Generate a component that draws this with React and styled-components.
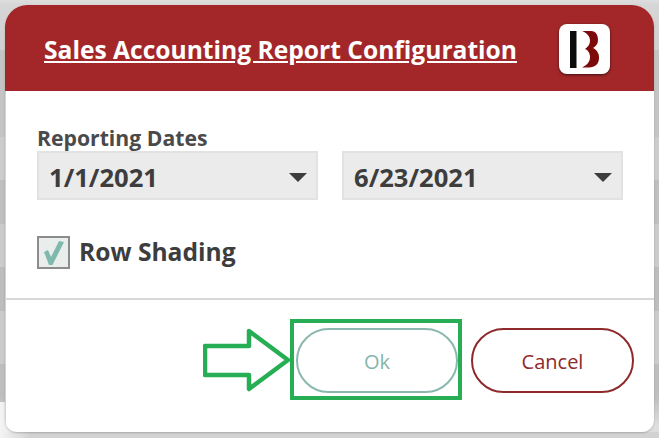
import styled, {createGlobalStyle} from 'styled-components'

const GlobalStyle = createGlobalStyle`
  html, body {
    margin: 0;
    padding: 0;
    background: #e4e4e4;
  }
  body {
    font-family: 'Open Sans', 'Noto Sans', sans-serif;
  }
`

const Logo = () => (
  <LogoBox>
    <svg width="30" height="37" viewBox="0 0 30 37">
      <rect x="0" y="0" width="6.5" height="37" fill="#0c0c0c" />
      <path
        d="M12 0 H21 C26 0 28 4 28 9 C28 13 26 15 23 17 C27 19 29 22 29 27 C29 33 25 36.500 19 36.500 H12 C17 34 20 31 20 26 C20 22 18 19 15 18 C18 16 20 13 20 10 C20 5 17 2 12 0 Z"
        fill="#7c0a0a"
      />
    </svg>
  </LogoBox>
)

const DateSelect = ({value}) => (
  <Select>
    <span>{value}</span>
    <Caret />
  </Select>
)

const App = () => (
  <Page>
    <GlobalStyle />
    <Dialog>
      <Header>
        <Title>Sales Accounting Report Configuration</Title>
        <Logo />
      </Header>
      <Body>
        <Label>Reporting Dates</Label>
        <DateRow>
          <DateSelect value="1/1/2021" />
          <DateSelect value="6/23/2021" />
        </DateRow>
        <CheckRow>
          <CheckBox>
            <svg width="29" height="29" viewBox="0 0 29 29">
              <path d="M5 14 L9 12 L12 19 L20 3 L25 4 L13.500 27 H10 Z" fill="#7fb9ae" />
            </svg>
          </CheckBox>
          <CheckLabel>Row Shading</CheckLabel>
        </CheckRow>
      </Body>
      <Footer>
        <Callout>
          <svg width="90" height="66" viewBox="0 0 90 66">
            <path
              d="M2 19 H46 V4 L85 33 L46 62 V48 H2 Z"
              fill="none"
              stroke="#27ae55"
              strokeWidth="4.500"
              strokeLinejoin="round"
            />
          </svg>
          <Highlight />
        </Callout>
        <PillButton $color="#8ab8ae" $text="#86b5ab" $width="162px">
          Ok
        </PillButton>
        <PillButton $color="#8f2a2c" $text="#8f2a2c" $width="163px">
          Cancel
        </PillButton>
      </Footer>
    </Dialog>
  </Page>
)

export default App

const Page = styled.div`
  width: 659px;
  height: 438px;
  padding: 5px 5px 0 5px;
  box-sizing: border-box;
  overflow: hidden;
  background:
    linear-gradient(90deg, #f4f4f4, rgba(244, 244, 244, 0) 30px) left bottom / 100% 36px no-repeat,
    linear-gradient(#d2d2d2, #d2d2d2) left bottom / 100% 6px no-repeat,
    linear-gradient(
      #dedede 0,
      #d6d6d6 5px,
      #d0d0d0 50px,
      #c4c4c4 50px,
      #c4c4c4 137px,
      #cccccc 137px,
      #cccccc 180px,
      #bfbfbf 180px,
      #bfbfbf 224px,
      #cbcbcb 224px,
      #cbcbcb 267px,
      #bdbdbd 267px,
      #bdbdbd 311px,
      #cbcbcb 311px,
      #cbcbcb 364px,
      #bebebe 364px,
      #bebebe 397px,
      #dddddd 425px
    );
`
const Dialog = styled.div`
  width: 649px;
  height: 427px;
  background: #fff;
  border-radius: 22px 22px 12px 12px;
  box-shadow: 0 1px 2px rgba(0, 0, 0, 0.2);
  display: flex;
  flex-direction: column;
  overflow: hidden;
`
const Header = styled.div`
  height: 86px;
  flex: none;
  background: #a32729;
  display: flex;
  align-items: center;
  justify-content: space-between;
  padding: 0 44px 0 39px;
`
const Title = styled.h1`
  margin: 0;
  padding-top: 2px;
  color: #fff;
  font-size: 24.600px;
  font-weight: 700;
  text-decoration: underline;
  text-decoration-thickness: 2px;
  text-underline-offset: 2px;
  white-space: nowrap;
`
const LogoBox = styled.div`
  width: 51px;
  height: 50px;
  margin-top: 2px;
  background: #fff;
  border-radius: 8px;
  box-shadow: 0 1px 3px rgba(0, 0, 0, 0.6);
  display: flex;
  align-items: center;
  justify-content: center;
`
const Body = styled.div`
  height: 209px;
  flex: none;
  padding: 33px 30px 0 31px;
  box-sizing: border-box;
  border-left: 1px solid #d4d4d4;
  border-bottom: 2px solid #d9d9d9;
`
const Label = styled.div`
  font-size: 21.200px;
  font-weight: 700;
  line-height: 27px;
  color: #4a4a4a;
`
const DateRow = styled.div`
  display: flex;
  gap: 24px;
`
const Select = styled.div`
  width: 281px;
  height: 49px;
  box-sizing: border-box;
  background: #ebebeb;
  border: 2px solid #e2e2e2;
  padding: 3px 9px 0 10px;
  display: flex;
  align-items: center;
  justify-content: space-between;
  font-size: 25.600px;
  font-weight: 700;
  color: #3d3d3d;
`
const Caret = styled.div`
  width: 0;
  height: 0;
  border-left: 9px solid transparent;
  border-right: 9px solid transparent;
  border-top: 9px solid #3d3d3d;
`
const CheckRow = styled.div`
  display: flex;
  align-items: center;
  gap: 9px;
  margin-top: 34px;
`
const CheckBox = styled.div`
  width: 33px;
  height: 33px;
  box-sizing: border-box;
  border: 2px solid #8c8c8c;
  background: #e9eeed;
  display: flex;
  align-items: center;
  justify-content: center;
`
const CheckLabel = styled.div`
  font-size: 24.600px;
  font-weight: 700;
  line-height: 36px;
  color: #3d3d3d;
`
const Footer = styled.div`
  position: relative;
  flex: 1;
  display: flex;
  justify-content: flex-end;
  align-items: flex-start;
  gap: 13px;
  padding: 28px 20px 0 0;
  border-left: 1px solid #d4d4d4;
`
const PillButton = styled.div`
  width: ${props => props.$width};
  height: 65px;
  box-sizing: border-box;
  border: 2px solid ${props => props.$color};
  border-radius: 33px;
  color: ${props => props.$text};
  font-size: 20px;
  padding-top: 2px;
  display: flex;
  align-items: center;
  justify-content: center;
`
const Callout = styled.div`
  position: absolute;
  left: 197px;
  top: 19px;
  display: flex;
  align-items: center;
  svg {
    margin-right: -3px;
  }
`
const Highlight = styled.div`
  width: 172px;
  height: 81px;
  box-sizing: border-box;
  border: 4.500px solid #27ae55;
`
